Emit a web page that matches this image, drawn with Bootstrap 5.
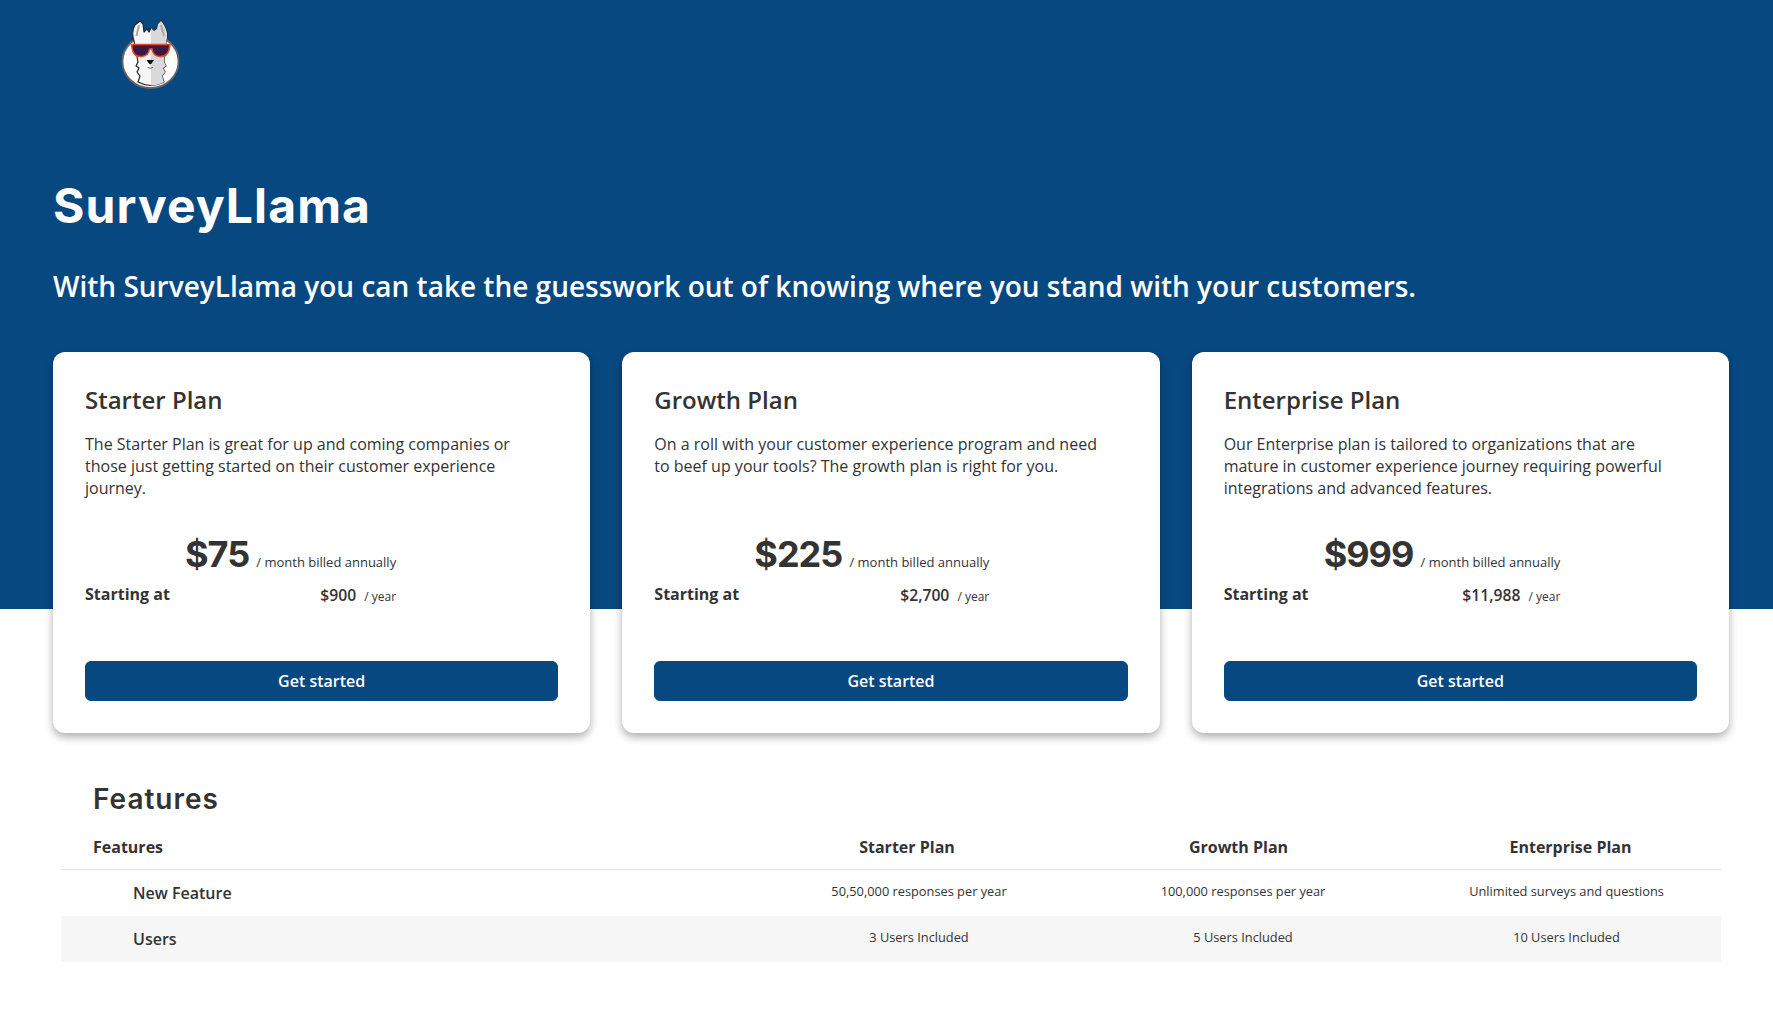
<!DOCTYPE html>
<html lang="en"><head><meta charset="utf-8"><title>SurveyLlama</title>
<link rel="stylesheet" href="https://cdn.jsdelivr.net/npm/bootstrap@5.3.0/dist/css/bootstrap.min.css">
<style>
body{font-family:"Open Sans","Liberation Sans",sans-serif;color:#333;background:#fff}
.hero-band{background:#084881;height:609px;padding:18px 44px 0 53px}
.brand-logo{display:block;width:62px;height:72px;margin-left:67px}
.hero-title{font-family:Inter,"Open Sans",sans-serif;font-weight:700;font-size:48px;line-height:58px;color:#fff;margin:87px 0 0;letter-spacing:1.1px}
.hero-sub{font-weight:600;font-size:28px;line-height:38px;color:#fff;margin:32px 0 0}
.plan-row{--bs-gutter-x:32px;margin-top:47px}
.plan-box{height:381px;border:0;border-radius:12px;box-shadow:0 4px 8px rgba(0,0,0,.32);padding:32px;color:#333}
.plan-name{font-size:24px;font-weight:600;line-height:32px;margin:0 0 17px}
.plan-desc{font-size:16px;line-height:22px;height:66px;margin:0 0 32px;max-width:455px}
.price-lbl{width:100px;font-size:16px;font-weight:700;line-height:22px;align-self:flex-end;margin-bottom:3px;white-space:nowrap}
.price-big{font-family:Inter,"Open Sans",sans-serif;font-weight:700;font-size:36px;line-height:46px;letter-spacing:-1px}
.price-unit{font-size:13px;margin-left:3px}
.price-year{font-size:15.7px;font-weight:600;line-height:22px;margin-top:7px}
.price-year span{font-size:12px;font-weight:400;margin-left:4px}
.start-btn{background:#084881;border-color:#084881;color:#fff;font-weight:600;font-size:16px;height:40px;line-height:24px;border-radius:6px;margin-top:53px;padding:7px}
.feature-area{padding:172px 52px 0 61px}
.feature-title{font-family:Inter,"Open Sans",sans-serif;font-weight:600;font-size:28px;line-height:36px;color:#333;margin:0 0 18px 32px;letter-spacing:1px}
.feature-table{table-layout:fixed;width:100%;color:#333;margin:0}
.feature-table th,.feature-table td{vertical-align:middle;border:0;color:#333;background:transparent;box-shadow:none}
.feature-table thead th{font-size:16px;font-weight:700;height:32px;padding:0 0 10px;border-bottom:1px solid #e3e3e3;text-align:center}
.feature-table thead th:first-child{text-align:left;padding-left:32px}
.feature-table tbody td{height:46px;padding:0;font-size:12.8px;text-align:center}
.feature-table tbody td:first-child{font-size:16px;font-weight:600;text-align:left;padding:0 0 0 72px}
.feature-table tbody td:not(:first-child){padding-bottom:2px}
.head-a{padding-right:22px!important}.head-b{padding-right:7px!important}.head-c{padding-left:16px!important}
.cell-c{padding-left:8px!important}
.cell-mid{padding-left:2px!important}
.feature-table .shaded td{background:#f6f6f6}
</style></head>
<body>
<section class="hero-band">
<svg class="brand-logo" viewBox="0 0 62 72" role="img" aria-label="SurveyLlama logo">
<ellipse cx="30.5" cy="43.5" rx="28" ry="26.5" fill="#fff" stroke="#666" stroke-width="1.8"/>
<path d="M14 23 Q11 14 15 7 L20 3 L23 6 L24 14 L27 11 L29 14 L31 10 L34 13 L37 11 L38 6 L41 3 Q45 7 47 15 Q47.500 20 46 24 L44 44 L46 48 L43 50 L45 54 L42 58 L44 64 Q31 71 18 64 L20 58 L17 54 L19 50 L16 48 L18 44 Z" fill="#f6f6f6" stroke="#222" stroke-width="1.2" stroke-linejoin="round"/>
<path d="M31 10 L34 13 L37 11 L38 6 L41 3 Q45 7 47 15 Q47.500 20 46 24 L44 44 L46 48 L43 50 L45 54 L42 58 L44 64 Q38 67.500 31 67.500 Z" fill="#d9d9d9"/>
<path d="M19 7 L16.500 18 M41 7 L44 18" stroke="#a8a8a8" stroke-width="2" fill="none"/>
<path d="M11.500 26.500 H50 L49 32 Q47 39 39.500 38.500 Q33 38 32 31 H29.500 Q28.500 38 21.500 38.500 Q14 39 12.500 32 Z" fill="#3a1a44" stroke="#ea4a1f" stroke-width="1.6" stroke-linejoin="round"/>
<path d="M26.500 42 H34 L31.500 45.500 L30.200 46.500 L29 45.500 Z" fill="#111"/>
<path d="M27.500 49.500 Q30.200 51 33 49.500" stroke="#666" stroke-width="1" fill="none"/>
</svg>
<h1 class="hero-title">SurveyLlama</h1>
<p class="hero-sub">With SurveyLlama you can take the guesswork out of knowing where you stand with your customers.</p>
<div class="row plan-row">
<div class="col-4"><div class="card plan-box">
<h2 class="plan-name">Starter Plan</h2>
<p class="plan-desc">The Starter Plan is great for up and coming companies or those just getting started on their customer experience journey.</p>
<div class="d-flex"><div class="price-lbl">Starting at</div><div class="text-end"><div><span class="price-big">$75</span> <span class="price-unit">/ month billed annually</span></div><div class="price-year">$900 <span>/ year</span></div></div></div>
<a class="btn start-btn w-100" href="#">Get started</a>
</div></div>
<div class="col-4"><div class="card plan-box">
<h2 class="plan-name">Growth Plan</h2>
<p class="plan-desc">On a roll with your customer experience program and need to beef up your tools? The growth plan is right for you.</p>
<div class="d-flex"><div class="price-lbl">Starting at</div><div class="text-end"><div><span class="price-big">$225</span> <span class="price-unit">/ month billed annually</span></div><div class="price-year">$2,700 <span>/ year</span></div></div></div>
<a class="btn start-btn w-100" href="#">Get started</a>
</div></div>
<div class="col-4"><div class="card plan-box">
<h2 class="plan-name">Enterprise Plan</h2>
<p class="plan-desc">Our Enterprise plan is tailored to organizations that are mature in customer experience journey requiring powerful integrations and advanced features.</p>
<div class="d-flex"><div class="price-lbl">Starting at</div><div class="text-end"><div><span class="price-big">$999</span> <span class="price-unit">/ month billed annually</span></div><div class="price-year">$11,988 <span>/ year</span></div></div></div>
<a class="btn start-btn w-100" href="#">Get started</a>
</div></div>
</div>
</section>
<section class="feature-area">
<h2 class="feature-title">Features</h2>
<table class="table table-borderless feature-table">
<colgroup><col style="width:695px"><col style="width:324px"><col style="width:324px"><col></colgroup>
<thead><tr><th>Features</th><th class="head-a">Starter Plan</th><th class="head-b">Growth Plan</th><th class="head-c">Enterprise Plan</th></tr></thead>
<tbody>
<tr><td>New Feature</td><td class="cell-mid">50,50,000 responses per year</td><td class="cell-mid">100,000 responses per year</td><td class="cell-c">Unlimited surveys and questions</td></tr>
<tr class="shaded"><td>Users</td><td class="cell-mid">3 Users Included</td><td class="cell-mid">5 Users Included</td><td class="cell-c">10 Users Included</td></tr>
</tbody></table>
</section>
<script src="https://cdn.jsdelivr.net/npm/bootstrap@5.3.0/dist/js/bootstrap.bundle.min.js"></script>
</body></html>
